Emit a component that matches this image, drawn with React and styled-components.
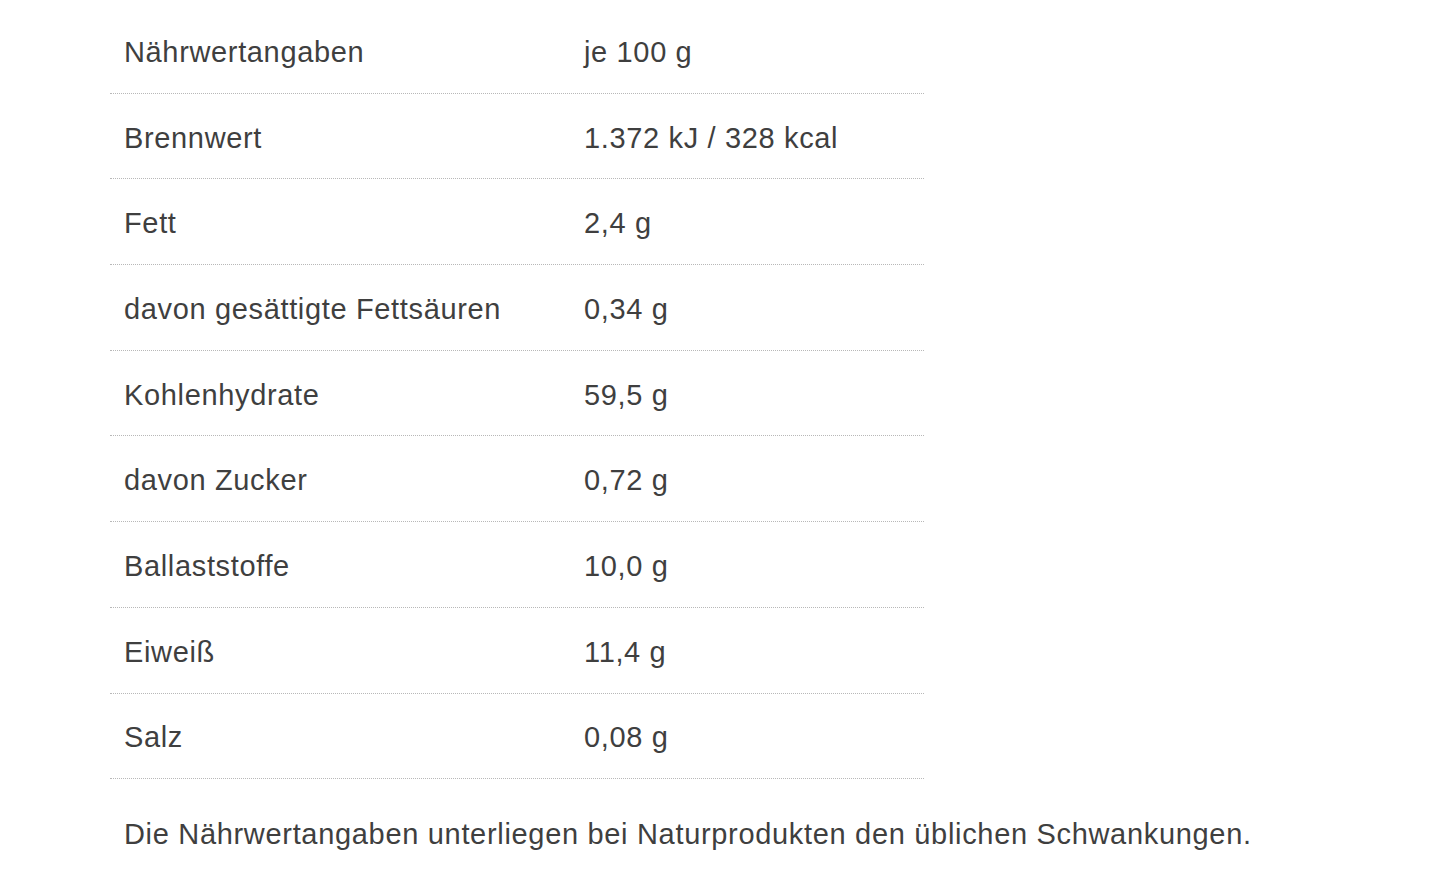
import React from "react";
import styled, { createGlobalStyle } from "styled-components";

const GlobalStyle = createGlobalStyle`
  body {
    margin: 0;
    background: #ffffff;
    font-family: "Liberation Sans", Arial, sans-serif;
    color: #3f3f3f;
  }
`;

const Page = styled.div`
  padding: 8px 0 0 110px;
`;

const Table = styled.div`
  width: 814px;
  display: flex;
  flex-direction: column;
`;

const Row = styled.div`
  display: grid;
  grid-template-columns: 460px 1fr;
  height: 85.7px;
  box-sizing: border-box;
  align-items: center;
  border-bottom: 1.5px dotted #b8b8b8;
`;

const Cell = styled.div`
  padding: 3px 14px 0;
  font-size: 29px;
  line-height: 40px;
  letter-spacing: 0.65px;
`;

const Note = styled.p`
  margin: 35px 0 0 14px;
  font-size: 29px;
  line-height: 40px;
  letter-spacing: 0.68px;
  white-space: nowrap;
`;

const rows = [
  ["Nährwertangaben", "je 100 g"],
  ["Brennwert", "1.372 kJ / 328 kcal"],
  ["Fett", "2,4 g"],
  ["davon gesättigte Fettsäuren", "0,34 g"],
  ["Kohlenhydrate", "59,5 g"],
  ["davon Zucker", "0,72 g"],
  ["Ballaststoffe", "10,0 g"],
  ["Eiweiß", "11,4 g"],
  ["Salz", "0,08 g"],
];

const App = () => {
  return (
    <>
      <GlobalStyle />
      <Page>
        <Table>
          {rows.map(([label, value]) => (
            <Row key={label}>
              <Cell>{label}</Cell>
              <Cell>{value}</Cell>
            </Row>
          ))}
        </Table>
        <Note>
          Die Nährwertangaben unterliegen bei Naturprodukten den üblichen
          Schwankungen.
        </Note>
      </Page>
    </>
  );
};

export default App;
